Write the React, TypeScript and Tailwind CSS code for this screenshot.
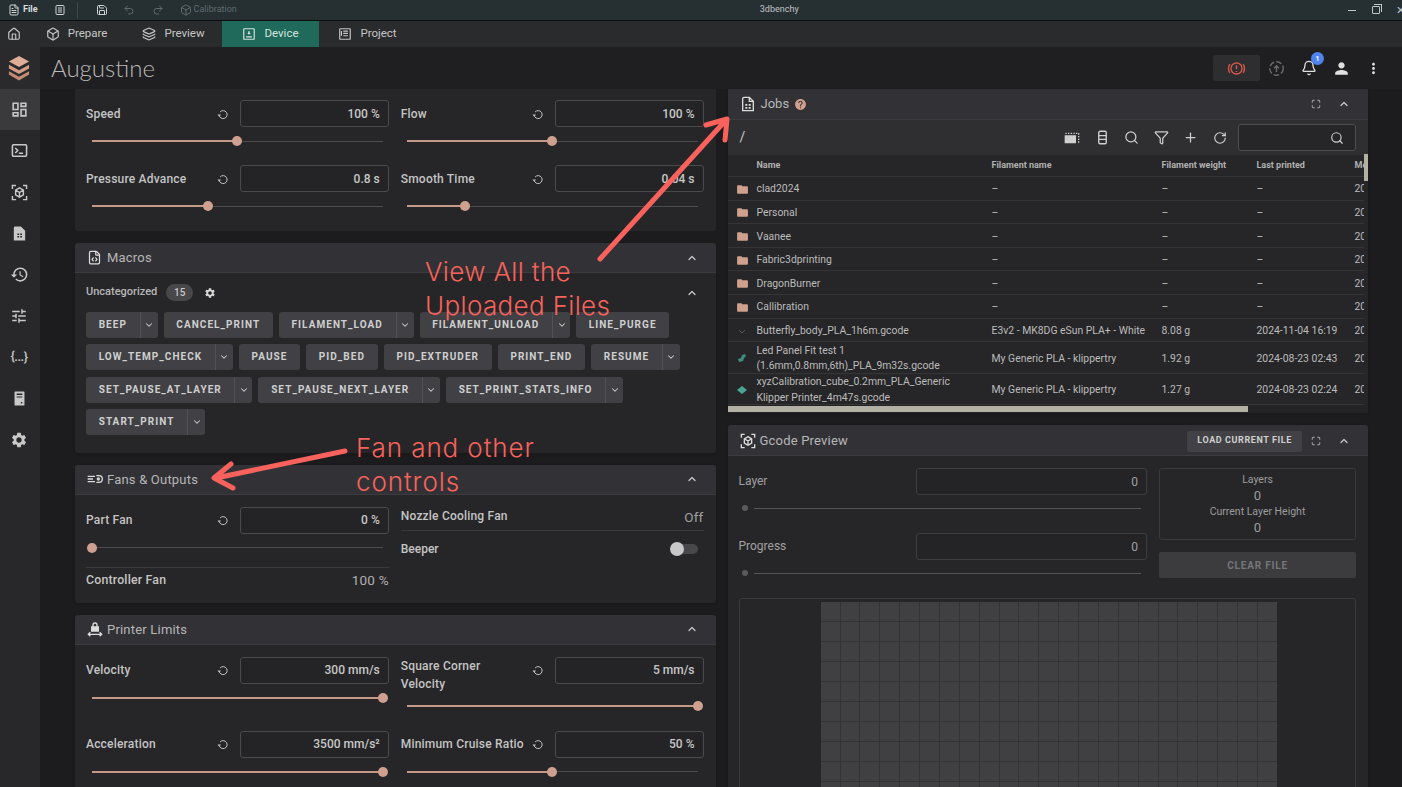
import { ReactNode } from 'react';
import clsx from 'clsx';
import { Bell, Box, ChevronDown, ChevronUp, FileCode, FileText, Filter, Home, Layers, Maximize, Plus, RotateCw, Save, Search, Redo2, Undo2 } from 'lucide-react';
import { MdFolder, MdHelp, MdHistory, MdMoreVert, MdOutlineDashboard, MdPerson, MdSettings, MdTune } from 'react-icons/md';

const ACCENT = '#cfa08d';

const Reset = () => (
  <svg viewBox="0 0 24 24" className="w-3 h-3 text-[#c4c4c4] shrink-0" fill="none" stroke="currentColor" strokeWidth="2">
    <path d="M6.2 8a8 8 0 1 1-1.9 6" />
    <path d="M1 13h7l-3.5 4.5z" fill="currentColor" stroke="none" />
  </svg>
);

const Cube = ({ className }: { className?: string }) => (
  <svg viewBox="0 0 24 24" className={className} fill="none" stroke="currentColor" strokeWidth="2">
    <path d="M2 7V2h5M17 2h5v5M22 17v5h-5M7 22H2v-5" />
    <path d="M12 5.5l5.500 3.200v6.600L12 18.500l-5.500-3.200V8.700zM6.500 8.700l5.500 3.300 5.500-3.300M12 12v6.500" />
  </svg>
);

const FileTable = ({ className }: { className?: string }) => (
  <svg viewBox="0 0 24 24" className={className} fill="none" stroke="currentColor" strokeWidth="2">
    <path d="M6 2h8l6 6v14H4V4a2 2 0 0 1 2-2zM14 2v6h6" />
    <path d="M8 12h3v2.500H8zM13 12h3v2.500h-3zM8 16.500h3V19H8zM13 16.500h3V19h-3z" fill="currentColor" stroke="none" />
  </svg>
);

const Slider = ({ pct, className }: { pct: number; className?: string }) => (
  <div className={clsx('relative h-[10px] mx-[6px] flex items-center', className)}>
    <div className="h-px w-full bg-[#4c4c4e]" />
    <div className="absolute left-0 h-[2px] bg-[#c49a89]" style={{ width: `${pct}%` }} />
    <div className="absolute w-[10px] h-[10px] -ml-[5px] rounded-full bg-[#cfa08f]" style={{ left: `${pct}%` }} />
  </div>
);

const NumberBox = ({ value, className }: { value: string; className?: string }) => (
  <div className={clsx('h-[27px] border rounded-[3px] bg-[#242426] flex items-center justify-end pr-2 text-[12px]', className)}>
    {value}
  </div>
);

const Field = ({ label, value, pct, wrap }: { label: string; value: string; pct: number; wrap?: boolean }) => (
  <div>
    <div className={clsx('flex', wrap ? 'h-[35px]' : 'h-[27px] items-center')}>
      <div className={clsx('flex-1 text-[12px] font-medium tracking-[0.2px] text-[#c4c4c4]', wrap && 'leading-[18px]')}>
        <div className={clsx(wrap && 'max-w-[100px]')}>{label}</div>
      </div>
      <div className="h-[27px] flex items-center mr-[11px]">
        <Reset />
      </div>
      <NumberBox value={value} className="w-[149px] border-[#4a4a4c] font-medium text-[#c8c8c8]" />
    </div>
    <Slider pct={pct} className="mt-[9px]" />
  </div>
);

const Card = ({ title, icon, right, children, tall }: { title: string; icon: ReactNode; right?: ReactNode; children: ReactNode; tall?: boolean }) => (
  <section className="bg-[#262628] rounded-[3px] overflow-hidden shadow">
    <header className={clsx('bg-[#323236] border-b border-[#3c3c40] flex items-center pl-3 pr-[18px]', tall ? 'h-[31px] pt-[2px]' : 'h-[30px]')}>
      <span className="text-[#dcdcdc] w-[20px]">{icon}</span>
      <span className="text-[13px] text-[#b6b6b6] tracking-[0.2px]">{title}</span>
      <div className="ml-auto flex items-center">{right}</div>
    </header>
    {children}
  </section>
);

const Collapse = () => <ChevronUp size={12} strokeWidth={2.5} className="text-[#c8c8c8]" />;

const MacroBtn = ({ name, menu }: { name: string; menu?: boolean }) => (
  <div className="h-[26px] rounded-[3px] bg-[#414145] flex items-center text-[10px] font-bold tracking-[1.05px] text-[#cfcfcf]">
    <span className="px-[12.700px] pb-px">{name}</span>
    {menu && (
      <span className="w-[18px] h-full border-l border-[#525256] flex items-center justify-center">
        <ChevronDown size={10} strokeWidth={2.5} />
      </span>
    )}
  </div>
);

const macros: [string, boolean][] = [
  ['BEEP', true], ['CANCEL_PRINT', false], ['FILAMENT_LOAD', true], ['FILAMENT_UNLOAD', true], ['LINE_PURGE', false],
  ['LOW_TEMP_CHECK', true], ['PAUSE', false], ['PID_BED', false], ['PID_EXTRUDER', false], ['PRINT_END', false], ['RESUME', true],
  ['SET_PAUSE_AT_LAYER', true], ['SET_PAUSE_NEXT_LAYER', true], ['SET_PRINT_STATS_INFO', true],
  ['START_PRINT', true],
];

type Job = { icon: ReactNode; name: ReactNode; filament: string; weight: string; last: string; tall?: boolean };

const folder = <MdFolder size={13} color={ACCENT} />;

const jobs: Job[] = [
  ...['clad2024', 'Personal', 'Vaanee', 'Fabric3dprinting', 'DragonBurner', 'Callibration'].map((name) => ({
    icon: folder, name, filament: '–', weight: '–', last: '–',
  })),
  {
    icon: (
      <svg viewBox="0 0 12 12" className="w-3 h-3 text-[#55585a]" fill="none" stroke="currentColor"><path d="M3 5l3 3 3-3" /></svg>
    ),
    name: 'Butterfly_body_PLA_1h6m.gcode', filament: 'E3v2 - MK8DG eSun PLA+ - White', weight: '8.08 g', last: '2024-11-04 16:19',
  },
  {
    icon: (
      <svg viewBox="0 0 12 12" className="w-3 h-3 text-[#3f8d7e]" fill="currentColor"><path d="M2 7l3-1 1-3 3-1 1 2-2 2-1 3-4 1z" /></svg>
    ),
    name: <>Led Panel Fit test 1<br />(1.6mm,0.8mm,6th)_PLA_9m32s.gcode</>, filament: 'My Generic PLA - klippertry', weight: '1.92 g', last: '2024-08-23 02:43', tall: true,
  },
  {
    icon: (
      <svg viewBox="0 0 12 12" className="w-3 h-3 text-[#4aa595]" fill="currentColor"><path d="M6 2l5 4-5 4-5-4z" /></svg>
    ),
    name: <>xyzCalibration_cube_0.2mm_PLA_Generic<br />Klipper Printer_4m47s.gcode</>, filament: 'My Generic PLA - klippertry', weight: '1.27 g', last: '2024-08-23 02:24', tall: true,
  },
];

const JobRow = ({ job }: { job: Job }) => (
  <div className={clsx('flex items-center border-b border-[#353537] pt-[2px] text-[10.400px] text-[#bcbcbc]', job.tall ? 'h-[31.500px] leading-[15.500px]' : 'h-[23.600px]')}>
    <span className="w-[29px] shrink-0 pl-[8px]">{job.icon}</span>
    <span className="w-[235px] shrink-0">{job.name}</span>
    <span className="w-[170px] shrink-0">{job.filament}</span>
    <span className="w-[95px] shrink-0">{job.weight}</span>
    <span className="w-[98px] shrink-0">{job.last}</span>
    <span className="shrink-0">2024-11-04</span>
  </div>
);

const GcodeField = ({ label }: { label: string }) => (
  <div>
    <div className="flex items-center h-[27px]">
      <span className="flex-1 text-[12px] text-[#a0a0a0] pb-[2px]">{label}</span>
      <NumberBox value="0" className="w-[231px] border-[#3e3e40] text-[#a0a0a0]" />
    </div>
    <div className="flex items-center mt-[8px] h-[10px] pl-[3px] pr-[6px]">
      <span className="w-[6px] h-[6px] rounded-full bg-[#5a5a5c]" />
      <span className="ml-[6px] flex-1 h-px bg-[#555557]" />
    </div>
  </div>
);

const navItems: ReactNode[] = [
  <MdOutlineDashboard size={19} />,
  <svg viewBox="0 0 24 24" className="w-[17px] h-[17px]" fill="none" stroke="currentColor" strokeWidth="2.2"><rect x="2" y="4" width="20" height="16" rx="1.500" /><path d="M6 8.500l3.500 3.500L6 15.500M11 16h6" /></svg>,
  <Cube className="w-[17px] h-[17px]" />,
  <svg viewBox="0 0 24 24" className="w-[17px] h-[17px]" fill="currentColor"><path fillRule="evenodd" d="M6 2h8l6 6v14H4V4a2 2 0 0 1 2-2zM9 12v2h2.500v-2zM13 12v2h2.500v-2zM9 15.500v2h2.500v-2zM13 15.500v2h2.500v-2z" /></svg>,
  <MdHistory size={19} />,
  <MdTune size={18} />,
  <span className="text-[13px] font-medium tracking-[-0.5px]">{'{...}'}</span>,
  <svg viewBox="0 0 24 24" className="w-[17px] h-[17px]" fill="currentColor"><path fillRule="evenodd" d="M6 2h12a1 1 0 0 1 1 1v18a1 1 0 0 1-1 1H6a1 1 0 0 1-1-1V3a1 1 0 0 1 1-1zM8 5v2h8V5zM8 9v1.500h8V9zM14 17v2h2v-2z" /></svg>,
  <MdSettings size={18} />,
];

const gridCells = Array.from({ length: 23 * 10 });

export default function App() {
  return (
    <div className="relative h-[787px] w-[1402px] overflow-hidden bg-[#1c1c1e] flex flex-col font-['Roboto',sans-serif]">
      {/* Title bar */}
      <div className="h-[21px] shrink-0 bg-[#263033] border-b border-[#0c0e0f] flex items-center text-[9px] relative">
        <FileText size={12} className="ml-[8px] text-[#d0d4d5]" />
        <span className="ml-[3px] font-bold text-[#d8dcdd]">File</span>
        <svg viewBox="0 0 24 24" className="ml-[16px] w-3 h-3 text-[#d0d4d5]" fill="none" stroke="currentColor" strokeWidth="2"><rect x="4" y="3" width="16" height="18" rx="2" /><path d="M8 8h8M8 12h8M8 16h8" /></svg>
        <div className="ml-[11px] h-4 w-px bg-[#3c484b]" />
        <Save size={12} className="ml-[18px] text-[#d0d4d5]" />
        <Undo2 size={12} className="ml-[15px] text-[#5f6a6d]" />
        <Redo2 size={12} className="ml-[17px] text-[#5f6a6d]" />
        <Box size={12} className="ml-[16px] text-[#5f6a6d]" />
        <span className="ml-[2px] text-[#5f6a6d]">Calibration</span>
        <span className="ml-[523px] text-[#c0c5c6]">3dbenchy</span>
        <div className="ml-auto flex items-center gap-[16px] -mr-[3px] text-[#c0c5c6]">
          <span className="w-2 h-px bg-current" />
          <span className="relative w-2 h-2 border border-current rounded-[1px] after:absolute after:-top-[3px] after:-right-[3px] after:w-2 after:h-2 after:border-t after:border-r after:border-current" />
          <span className="text-[11px] leading-none">✕</span>
        </div>
      </div>

      {/* Tabs */}
      <div className="h-[26px] shrink-0 bg-[#2a2b2d] flex items-center text-[11.500px] text-[#c6c6c6]">
        <div className="w-[28px] flex justify-center"><Home size={14} /></div>
        <div className="w-[97px] h-full flex items-center justify-center gap-[8px]"><Box size={14} />Prepare</div>
        <div className="w-[97px] h-full flex items-center justify-center gap-[8px]"><Layers size={14} />Preview</div>
        <div className="w-[97px] h-full flex items-center justify-center gap-[8px] bg-[#1f6a5b] text-[#d5e2df]">
          <svg viewBox="0 0 24 24" className="w-[14px] h-[14px]" fill="none" stroke="currentColor" strokeWidth="2"><rect x="3" y="3" width="18" height="18" rx="1" /><path d="M7 17h10M12 7v5M10 10l2 2 2-2" /></svg>
          Device
        </div>
        <div className="w-[97px] h-full flex items-center justify-center gap-[8px]">
          <svg viewBox="0 0 24 24" className="w-[14px] h-[14px]" fill="none" stroke="currentColor" strokeWidth="2"><rect x="3" y="3" width="18" height="18" rx="1" /><path d="M9 7h8M9 11h8M9 15h8M6 7v8" /></svg>
          Project
        </div>
      </div>

      {/* App bar */}
      <div className="h-[42px] shrink-0 bg-[#1f1f21] flex items-center">
        <div className="w-[40px] h-full bg-[#2a2a2c] flex items-center justify-center pr-[2px]">
          <svg viewBox="0 0 24 28" className="w-[22px] h-[26px]" fill="#d49c85">
            <path d="M12 1l11 6-11 6L1 7z" fill="#e0ad98" />
            <path d="M1 10.500l11 6 11-6v4l-11 6-11-6z" fill="#d49c85" />
            <path d="M1 17.500l11 6 11-6v3.500l-11 6.500-11-6.500z" fill="#c58b74" />
          </svg>
        </div>
        <span className="ml-[11px] font-['Lato',sans-serif] text-[24px] font-light text-[#b9b9b9]">Augustine</span>
        <div className="ml-auto flex items-center">
          <div className="w-[47px] h-[26px] rounded-[3px] bg-[#2e2e30] flex items-center justify-center">
            <svg viewBox="0 0 24 24" className="w-[19px] h-[19px]" fill="none" stroke="#d2564a" strokeWidth="1.800">
              <circle cx="12" cy="12" r="7" />
              <path d="M12 8v5M12 15v1.500M3.500 6.500a11 11 0 0 0 0 11M20.500 6.500a11 11 0 0 1 0 11" />
            </svg>
          </div>
          <svg viewBox="0 0 24 24" className="ml-[8px] w-[17px] h-[17px] text-[#6a6a6c]" fill="none" stroke="currentColor" strokeWidth="2">
            <circle cx="12" cy="12" r="9.500" strokeDasharray="8 3" />
            <path d="M12 17V8M8.500 11.500L12 8l3.500 3.500" />
          </svg>
          <div className="relative ml-[16px]">
            <Bell size={16} className="text-[#e0e0e0]" />
            <span className="absolute -top-[8px] left-[10px] w-[13px] h-[13px] rounded-full bg-[#4f84f0] text-white text-[8px] font-medium flex items-center justify-center">1</span>
          </div>
          <MdPerson size={19} className="ml-[15px] text-[#e0e0e0]" />
          <MdMoreVert size={17} className="ml-[14px] mr-[20px] text-[#e0e0e0]" />
        </div>
      </div>

      <div className="flex-1 flex min-h-0">
        {/* Sidebar */}
        <nav className="w-[40px] shrink-0 bg-[#28282a] flex flex-col text-[#c8c8c8]">
          {navItems.map((item, i) => (
            <div key={i} className={clsx('h-[41.250px] flex items-center justify-center pr-[2px]', i === 0 && 'bg-[#3a3a3c]')}>{item}</div>
          ))}
        </nav>

        <main className="flex-1 pl-[35px] pr-[34px] grid grid-cols-2 gap-x-3 overflow-hidden">
          {/* Left column */}
          <div className="flex flex-col gap-3">
            <section className="bg-[#262628] rounded-b-[3px] pt-[11px] pl-[11px] pr-3 pb-5 grid grid-cols-2 gap-x-3 gap-y-[19px]">
              <Field label="Speed" value="100 %" pct={50} />
              <Field label="Flow" value="100 %" pct={50} />
              <Field label="Pressure Advance" value="0.8 s" pct={40} />
              <Field label="Smooth Time" value="0.04 s" pct={20} />
            </section>

            <Card title="Macros" icon={<FileCode size={15} />} right={<Collapse />}>
              <div className="pl-[11px] pr-3 pb-[18px]">
                <div className="h-[39px] flex items-center text-[11px] font-medium text-[#b8b8b8]">
                  Uncategorized
                  <span className="ml-[9px] w-[27px] h-[17px] rounded-full bg-[#48484a] text-center leading-[17px] text-[10px] text-[#c8c8c8]">15</span>
                  <MdSettings size={12} className="ml-[11px] text-[#d8d8d8]" />
                  <ChevronUp size={12} strokeWidth={2.5} className="ml-auto mr-[6px] text-[#c8c8c8]" />
                </div>
                <div className="flex flex-wrap gap-x-[6px] gap-y-[6.300px]">
                  {macros.map(([name, menu]) => <MacroBtn key={name} name={name} menu={menu} />)}
                </div>
              </div>
            </Card>

            <Card
              title="Fans & Outputs"
              icon={
                <svg viewBox="0 0 24 24" className="w-[16px] h-[16px]" fill="none" stroke="currentColor" strokeWidth="2">
                  <path d="M1 8h11M1 12h8M1 16h11" /><path d="M14 7h4a5 5 0 0 1 0 10h-4" /><circle cx="17" cy="12" r="1.500" />
                </svg>
              }
              right={<Collapse />}
            >
              <div className="pt-3 pl-[11px] pr-3 pb-2 grid grid-cols-2 gap-x-3">
                <div>
                  <Field label="Part Fan" value="0 %" pct={0} />
                  <div className="mt-[14px] border-t border-[#39393b] pb-[2px] flex justify-between items-center text-[12.300px] tracking-[0.2px] font-medium text-[#c4c4c4] h-[28px]">
                    <span>Controller Fan</span>
                    <span className="text-[#b0b0b0] font-normal text-[13.500px]">100 %</span>
                  </div>
                </div>
                <div className="-mt-[1px]">
                  <div className="h-[25px] pt-px border-b border-[#39393b] flex justify-between items-start text-[12px] tracking-[0.2px] font-medium text-[#c4c4c4]">
                    <span>Nozzle Cooling Fan</span>
                    <span className="text-[#a0a0a0] font-normal text-[13.500px]">Off</span>
                  </div>
                  <div className="mt-[9px] flex items-center justify-between text-[12px] font-medium text-[#c4c4c4]">
                    <span>Beeper</span>
                    <div className="relative w-[28px] h-[14px] mr-[6px] flex items-center">
                      <div className="absolute left-[2px] right-0 h-[10px] rounded-full bg-[#48484a]" />
                      <div className="absolute left-0 w-[14px] h-[14px] rounded-full bg-[#c8c8c8]" />
                    </div>
                  </div>
                </div>
              </div>
            </Card>

            <Card
              title="Printer Limits"
              icon={
                <svg viewBox="0 0 24 24" className="w-[16px] h-[16px]" fill="none" stroke="currentColor" strokeWidth="2">
                  <path d="M7 9h10v6H7z" fill="currentColor" /><path d="M9 9V6a3 3 0 0 1 6 0v3" /><path d="M2 20h20M5 17l-3 3 3 3M19 17l3 3-3 3" />
                </svg>
              }
              right={<Collapse />}
            >
              <div className="pt-3 pl-[11px] pr-3 pb-5 grid grid-cols-2 gap-x-3 gap-y-[20px]">
                <Field label="Velocity" value="300 mm/s" pct={100} />
                <Field label="Square Corner Velocity" value="5 mm/s" pct={100} wrap />
                <Field label="Acceleration" value="3500 mm/s²" pct={100} />
                <Field label="Minimum Cruise Ratio" value="50 %" pct={50} />
              </div>
            </Card>
          </div>

          {/* Right column */}
          <div className="flex flex-col gap-3">
            <section className="bg-[#262628] shadow relative">
              <header className="h-[31px] bg-[#323236] border-b border-[#3c3c40] flex items-center pl-3 pr-[18px]">
                <FileTable className="w-[16px] h-[16px] text-[#dcdcdc]" />
                <span className="ml-[5px] text-[13px] text-[#b6b6b6]">Jobs</span>
                <MdHelp size={13} color={ACCENT} className="ml-[5px]" />
                <Maximize size={10} className="ml-auto mr-[17px] text-[#c8c8c8]" />
                <Collapse />
              </header>
              <div className="h-[35px] bg-[#2f2f31] flex items-center pl-3 pr-3 text-[#d0d0d0]">
                <span className="text-[14px] text-[#c8c8c8]">/</span>
                <div className="ml-auto flex items-center gap-[14.500px]">
                  <svg viewBox="0 0 24 24" className="w-[16px] h-[16px]" fill="none" stroke="currentColor" strokeWidth="2">
                    <path d="M2 5h20v14" strokeDasharray="2 2" /><path d="M2 9h15v10H2z" fill="currentColor" />
                  </svg>
                  <svg viewBox="0 0 24 24" className="w-[15px] h-[15px]" fill="none" stroke="currentColor" strokeWidth="2.200">
                    <rect x="6" y="2" width="12" height="20" rx="2" /><path d="M6 9h12M6 15h12" />
                  </svg>
                  <Search size={15} />
                  <Filter size={15} />
                  <Plus size={15} />
                  <RotateCw size={14} />
                  <div className="w-[118px] h-[27px] -ml-[3px] border border-[#4e4e50] rounded-[3px] bg-[#262628] flex items-center justify-end pr-[11px]">
                    <Search size={14} />
                  </div>
                </div>
              </div>
              <div className="relative w-[636px] overflow-hidden">
                <div className="w-[760px]">
                  <div className="h-[22px] pt-px flex items-center border-b border-[#353537] text-[9px] font-bold text-[#b0b0b0]">
                    <span className="w-[29px]" />
                    <span className="w-[235px]">Name</span>
                    <span className="w-[170px]">Filament name</span>
                    <span className="w-[95px]">Filament weight</span>
                    <span className="w-[98px]">Last printed</span>
                    <span>Modified</span>
                  </div>
                  {jobs.map((job, i) => <JobRow key={i} job={job} />)}
                </div>
              </div>
              <div className="absolute right-0 top-[65px] w-[4px] h-[27px] bg-[#b3b0a6]" />
              <div className="h-[8px] bg-[#242426] pt-[1px]">
                <div className="h-[6px] w-[520px] bg-[#b3b0a6]" />
              </div>
            </section>

            <Card
              tall
              title="Gcode Preview"
              icon={<Cube className="w-[16px] h-[16px]" />}
              right={
                <>
                  <span className="h-[21px] px-[10px] rounded-[2px] bg-[#424246] flex items-center text-[9px] font-bold tracking-[0.6px] text-[#cfcfcf]">LOAD CURRENT FILE</span>
                  <Maximize size={10} className="ml-[9px] mr-[17px] text-[#c8c8c8]" />
                  <Collapse />
                </>
              }
            >
              <div className="pt-3 pl-[11px] pr-3 flex gap-3">
                <div className="flex-1 flex flex-col gap-[20px]">
                  <GcodeField label="Layer" />
                  <GcodeField label="Progress" />
                </div>
                <div className="w-[197px]">
                  <div className="h-[72px] border border-[#3a3a3c] rounded-[3px] flex flex-col items-center justify-center text-[10.500px] text-[#9c9c9c] leading-[16px]">
                    <span>Layers</span>
                    <span className="text-[13px]">0</span>
                    <span>Current Layer Height</span>
                    <span className="text-[13px]">0</span>
                  </div>
                  <div className="mt-3 h-[26px] rounded-[2px] bg-[#3c3c3e] flex items-center justify-center text-[10px] font-bold tracking-[0.8px] text-[#767678]">CLEAR FILE</div>
                </div>
              </div>
              <div className="mt-[20px] ml-[11px] mr-3 h-[300px] border border-[#3a3a3c] rounded-[3px] pt-[3px] pl-[3px]">
                <div className="mx-auto w-[456px] grid grid-cols-[repeat(23,1fr)] gap-px bg-[#343436]">
                  {gridCells.map((_, i) => <div key={i} className="h-[19px] bg-[#404042]" />)}
                </div>
              </div>
            </Card>
          </div>
        </main>
      </div>

      {/* Annotations */}
      <svg className="absolute inset-0 w-full h-full pointer-events-none" viewBox="0 0 1402 787" fill="none" stroke="#f9625c" strokeWidth="5">
        <path d="M600 259L726 120M706 125l21-6-2 21" strokeLinejoin="round" strokeLinecap="round" />
        <path d="M345 451L216 478M231 464l-17 14 19 10" strokeLinejoin="round" strokeLinecap="round" />
      </svg>
      <div className="absolute left-[425px] top-[255px] text-[26px] leading-[33.500px] tracking-[0.35px] text-[#f9625c] font-['Inter',sans-serif] font-light pointer-events-none">
        View All the<br />Uploaded Files
      </div>
      <div className="absolute left-[356px] top-[431px] text-[26px] leading-[34px] tracking-[0.9px] text-[#f9625c] font-['Inter',sans-serif] font-light pointer-events-none">
        Fan and other<br />controls
      </div>
    </div>
  );
}
